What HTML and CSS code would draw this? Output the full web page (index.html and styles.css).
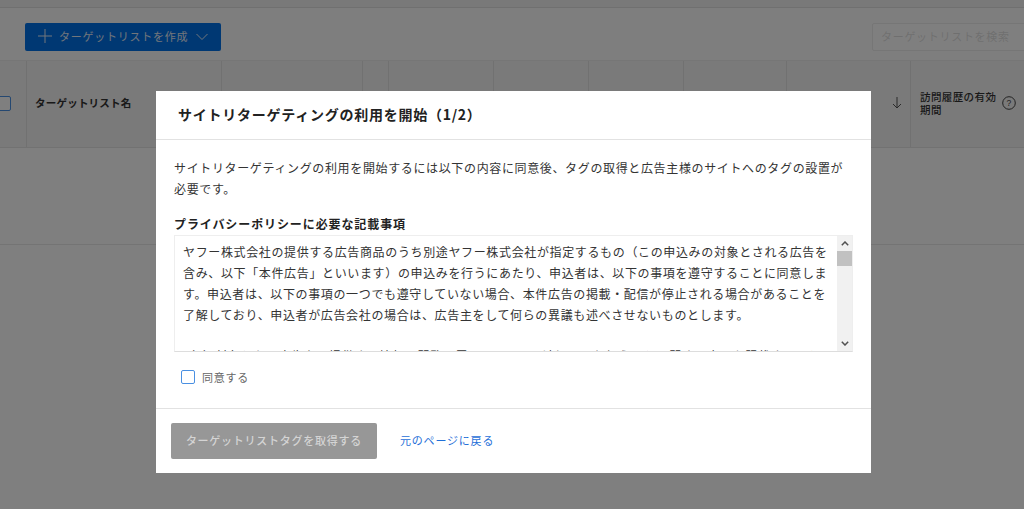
FILE: index.html
```html
<!DOCTYPE html>
<html lang="ja">
<head>
<meta charset="utf-8">
<title>サイトリターゲティング</title>
<link rel="stylesheet" href="styles.css">
</head>
<body>
<div class="page">
  <div class="topbar"></div>
  <div class="toolbar">
    <button class="create-btn">
      <svg class="plus" width="14" height="14" viewBox="0 0 14 14"><path d="M7 0v14M0 7h14" stroke="currentColor" stroke-width="1" fill="none"/></svg>
      <span>ターゲットリストを作成</span>
      <svg class="chev" width="12" height="8" viewBox="0 0 12 8"><path d="M.5 1 6 6.500 11.500 1" stroke="currentColor" stroke-width="1" fill="none"/></svg>
    </button>
    <div class="search">ターゲットリストを検索</div>
  </div>
  <div class="thead">
    <div class="th th-check"><span class="cb-page"></span></div>
    <div class="th th-name">ターゲットリスト名</div>
    <div class="th"></div><div class="th"></div><div class="th"></div><div class="th"></div><div class="th"></div><div class="th"></div>
    <div class="th th-sort">
      <svg width="10" height="12" viewBox="0 0 10 12"><path d="M5 0v11M1 7l4 4 4-4" stroke="currentColor" stroke-width="1" fill="none"/></svg>
    </div>
    <div class="th th-visit">
      <span>訪問履歴の有効期間</span>
      <svg class="help" width="14" height="14" viewBox="0 0 14 14"><circle cx="7" cy="7" r="6.300" stroke="currentColor" fill="none"/><text x="7" y="10" text-anchor="middle" font-size="8.500" font-family="Liberation Sans" fill="currentColor">?</text></svg>
    </div>
  </div>
  <div class="row"></div>
</div>

<div class="backdrop"></div>

<div class="modal">
  <div class="modal-head">サイトリターゲティングの利用を開始（1/2）</div>
  <div class="modal-body">
    <p class="lead">サイトリターゲティングの利用を開始するには以下の内容に同意後、タグの取得と広告主様のサイトへのタグの設置が必要です。</p>
    <h3 class="sub">プライバシーポリシーに必要な記載事項</h3>
    <div class="terms">
      <div class="terms-text">
        <p>ヤフー株式会社の提供する広告商品のうち別途ヤフー株式会社が指定するもの（この申込みの対象とされる広告を含み、以下「本件広告」といいます）の申込みを行うにあたり、申込者は、以下の事項を遵守することに同意します。申込者は、以下の事項の一つでも遵守していない場合、本件広告の掲載・配信が停止される場合があることを了解しており、申込者が広告会社の場合は、広告主をして何らの異議も述べさせないものとします。</p>
        <p class="gap">（1）対象となる広告主の提供する情報、閲覧の履歴について、適切に取り扱うことに関する事項を記載すること。</p>
      </div>
      <div class="scrollbar">
        <svg class="arrow" width="8" height="5" viewBox="0 0 8 5"><path d="M.8 4.200 4 1l3.200 3.200" stroke="#505050" stroke-width="1.500" fill="none"/></svg>
        <div class="thumb"></div>
        <svg class="arrow down" width="8" height="5" viewBox="0 0 8 5"><path d="M.8.8 4 4 7.200.8" stroke="#505050" stroke-width="1.500" fill="none"/></svg>
      </div>
    </div>
    <label class="agree"><span class="cb"></span><span>同意する</span></label>
  </div>
  <div class="modal-foot">
    <button class="get-btn">ターゲットリストタグを取得する</button>
    <a class="back-link" href="#">元のページに戻る</a>
  </div>
</div>
</body>
</html>
```

FILE: styles.css
```css
* { box-sizing: border-box; }
html, body { margin: 0; height: 100%; overflow: hidden; }
body {
  background: #fff;
  color: #333;
  font-family: "Noto Sans CJK JP", "Noto Sans", sans-serif;
  font-size: 12px;
}
.page { width: 1024px; height: 509px; overflow: hidden; }
.topbar { height: 8px; background: #f2f2f2; border-bottom: 1px solid #e0e0e0; }
.toolbar {
  height: 52px;
  padding: 15px 0 0 25px;
  display: flex;
  justify-content: space-between;
  align-items: flex-start;
  background: #fcfcfc;
}
.create-btn {
  width: 196px;
  height: 28px;
  display: flex;
  align-items: center;
  padding: 0 0 2px 13px;
  border: 0;
  border-radius: 2px;
  background: #0070e6;
  color: #e4ecf6;
  font: inherit;
  font-size: 11px;
  letter-spacing: .75px;
  font-weight: 400;
}
.create-btn span { margin-left: 7px; }
.chev { margin-left: 8px; margin-top: 2px; }
.search {
  width: 160px;
  height: 28px;
  margin-right: -8px;
  padding: 0 8px;
  border: 1px solid #ececec;
  border-radius: 2px;
  background: #fff;
  color: #dfdfdf;
  font-size: 11px;
  line-height: 24px;
  letter-spacing: .7px;
}
.thead {
  height: 88px;
  display: grid;
  grid-template-columns: 27px 195px 141px 26px 105px 95px 95px 103px 124px 114px;
  background: #f4f4f4;
  border-bottom: 1px solid #e4e4e4;
  border-top: 1px solid #ececec;
}
.th { border-right: 1px solid #e2e2e2; display: flex; align-items: center; padding-bottom: 3px; }
.th-check { justify-content: flex-end; padding-right: 15px; padding-bottom: 2px; }
.cb-page { width: 15px; height: 15px; flex: none; border: 1px solid #4a90e2; background: #fff; border-radius: 2px; }
.th-name { padding-left: 8px; font-size: 10.500px; font-weight: 700; letter-spacing: .22px; color: #333; }
.th-sort { justify-content: flex-end; padding-right: 8px; color: #555; }
.th-visit { border-right: 0; padding-left: 9px; gap: 4px; font-size: 10.500px; line-height: 13px; font-weight: 500; color: #333; letter-spacing: .4px; }
.th-visit span { width: 78px; }
.help { color: #444; flex: none; }
.row { height: 97px; border-bottom: 1px solid #e8e8e8; }

.backdrop { position: fixed; inset: 0; background: rgba(0, 0, 0, .5); }

.modal {
  position: fixed;
  left: 156px;
  top: 91px;
  width: 715px;
  height: 382px;
  background: #fff;
  display: flex;
  flex-direction: column;
}
.modal-head {
  height: 49px;
  padding: 0 22px 3px;
  display: flex;
  align-items: center;
  border-bottom: 1px solid #e2e2e2;
  font-size: 14px;
  font-weight: 700;
  letter-spacing: .75px;
  color: #222;
}
.modal-body { padding: 17px 18px 0; flex: 1; }
.lead { margin: 0; font-size: 12px; line-height: 21px; letter-spacing: .64px; color: #333; }
.sub { margin: 16px 0 2px; font-size: 12px; line-height: 18px; font-weight: 700; letter-spacing: .9px; color: #222; }
.terms {
  width: 679px;
  height: 117px;
  display: flex;
  border: 1px solid #eee;
  border-bottom-color: #ddd;
}
.terms-text {
  flex: 1;
  overflow: hidden;
  padding: 5px 8px 0;
  font-size: 12px;
  line-height: 21px;
  letter-spacing: .64px;
  color: #333;
}
.terms-text p { margin: 0; }
.terms-text .gap { margin-top: 20px; white-space: nowrap; }
.scrollbar {
  width: 15px;
  flex: none;
  background: #f1f1f1;
  display: flex;
  flex-direction: column;
  align-items: center;
  padding-top: 5px;
  padding-bottom: 5px;
}
.arrow { flex: none; }
.thumb { width: 100%; height: 15px; margin-top: 5px; background: #c1c1c1; }
.arrow.down { margin-top: auto; }
.agree { display: flex; align-items: center; gap: 7px; margin: 18px 0 0 7px; font-size: 11px; color: #666; letter-spacing: .75px; height: 14px; }
.cb { width: 14px; height: 14px; border: 1px solid #4a90e2; border-radius: 2px; background: #fff; }
.modal-foot {
  height: 65px;
  padding: 14px 15px 0;
  display: flex;
  align-items: flex-start;
  border-top: 1px solid #e2e2e2;
}
.get-btn {
  width: 206px;
  height: 36px;
  padding: 0 0 2px;
  border: 0;
  border-radius: 2px;
  background: #979797;
  color: #d4d4d4;
  font: inherit;
  font-size: 11px;
  font-weight: 500;
  letter-spacing: .75px;
}
.back-link {
  margin: 9px 0 0 23px;
  font-size: 11px;
  line-height: 16px;
  letter-spacing: .8px;
  color: #1f6fd8;
  text-decoration: none;
}
```
